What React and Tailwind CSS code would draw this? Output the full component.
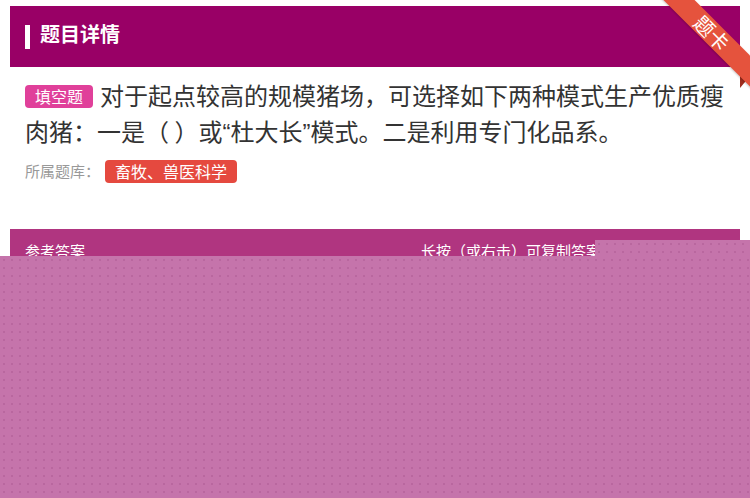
export default function App() {
  const dots =
    "bg-[#c574ab] bg-[radial-gradient(circle,#b9679f_0.8px,transparent_1.3px)] bg-[length:8px_8px]";
  return (
    <div className="relative w-[750px] h-[498px] overflow-hidden bg-white font-['Noto_Sans_CJK_SC','Noto_Sans',sans-serif]">
      <div className="px-[10px] pt-[6px]">
        {/* header */}
        <div className="h-[61px] bg-[#990066] flex items-center pl-[15px]">
          <div className="w-[5px] h-[24px] bg-white" />
          <h1 className="ml-[10px] mb-[6px] text-[20px] font-bold text-white leading-none">题目详情</h1>
        </div>

        {/* question */}
        <div className="px-[15px] pt-[10px]">
          <p className="text-[24px] leading-[36px] text-[#333]">
            <span className="inline-block align-[2px] mr-[7px] h-[23px] px-[10px] rounded-[4px] bg-[#e0409a] text-white text-[16px] leading-[23px]">
              填空题
            </span>
            对于起点较高的规模猪场，可选择如下两种模式生产优质瘦肉猪：一是（ ）或
            <span className="font-['Liberation_Sans',sans-serif]">“</span>杜大长
            <span className="font-['Liberation_Sans',sans-serif]">”</span>模式。二是利用专门化品系。
          </p>
          <div className="mt-[9px] flex items-center">
            <span className="text-[15px] text-[#999]">所属题库：</span>
            <span className="ml-[5px] h-[23px] px-[10px] rounded-[4px] bg-[#e5493f] text-white text-[16px] leading-[23px]">
              畜牧、兽医科学
            </span>
          </div>
        </div>

        {/* answer bar */}
        <div className="mt-[46px] h-[44px] bg-[#b03580] flex items-center px-[15px] text-[15px] text-white">
          <span>参考答案</span>
          <span className="ml-[336px]">长按（或右击）可复制答案</span>
        </div>
      </div>

      {/* ribbon */}
      <div className="absolute left-[740px] top-[76px] w-0 h-0 border-l-[10px] border-l-[#9e2c1e] border-b-[12px] border-b-transparent" />
      <div className="absolute left-[644px] top-[24px] w-[140px] h-[22px] rotate-45 bg-[#e5533d] flex items-center justify-center text-white text-[20px] leading-none shadow-[0_1px_2px_rgba(0,0,0,0.2)]">
        <span className="ml-[-6px]">题卡</span>
      </div>

      {/* locked overlay */}
      <div className={`absolute left-[595px] top-[240px] right-0 h-[16px] ${dots}`} />
      <div className={`absolute left-0 top-[256px] right-0 bottom-0 ${dots}`} />
    </div>
  );
}
